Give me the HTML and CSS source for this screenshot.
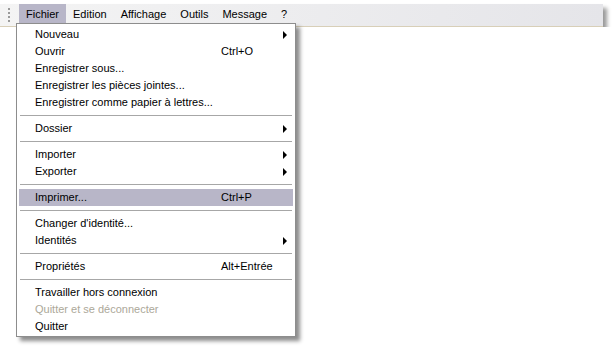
FILE: index.html
```html
<!DOCTYPE html>
<html lang="fr">
  <head>
    <meta charset="UTF-8" />
    <title>Fichier</title>
    <link rel="stylesheet" href="styles.css">
  </head>
  <body>
    <div class="menubar">
      <span class="grip"></span>
      <span class="top open">Fichier</span>
      <span class="top">Edition</span>
      <span class="top">Affichage</span>
      <span class="top">Outils</span>
      <span class="top">Message</span>
      <span class="top">?</span>
    </div>

    <ul class="menu">
      <li class="sub">Nouveau</li>
      <li>Ouvrir<span class="key">Ctrl+O</span></li>
      <li>Enregistrer sous...</li>
      <li>Enregistrer les pièces jointes...</li>
      <li>Enregistrer comme papier à lettres...</li>
      <li class="sep"></li>
      <li class="sub">Dossier</li>
      <li class="sep"></li>
      <li class="sub">Importer</li>
      <li class="sub">Exporter</li>
      <li class="sep"></li>
      <li class="hover">Imprimer...<span class="key">Ctrl+P</span></li>
      <li class="sep"></li>
      <li>Changer d'identité...</li>
      <li class="sub">Identités</li>
      <li class="sep"></li>
      <li>Propriétés<span class="key">Alt+Entrée</span></li>
      <li class="sep"></li>
      <li>Travailler hors connexion</li>
      <li class="off">Quitter et se déconnecter</li>
      <li>Quitter</li>
    </ul>
  </body>
</html>
```

FILE: styles.css
```css
* {
  margin: 0;
  padding: 0;
}

ul,
li {
  list-style: none;
}

body {
  background: #fff;
  font-family: "Liberation Sans", Arial, sans-serif;
  font-size: 11px;
  color: #000;
}

.menubar {
  display: flex;
  align-items: flex-start;
  margin-top: 4px;
  width: 603px;
  height: 22px;
  background: linear-gradient(to right, #f4f4f4, #e5e5e9);
  border-bottom: 1px solid #d8cfb8;
  box-shadow: 4px 4px 4px rgba(0, 0, 0, 0.4);
}

.menubar .grip {
  width: 2px;
  height: 14px;
  margin: 4px 9px 0 8px;
  background: repeating-linear-gradient(#9a9a9a 0 2px, transparent 2px 4px);
}

.menubar .top {
  height: 19px;
  line-height: 20px;
  padding: 0 7px;
}

.menubar .open {
  background: #b8b6c8;
}

.menu {
  position: absolute;
  left: 16px;
  top: 23px;
  width: 274px;
  padding: 2px 2px 1px;
  background: #fff;
  border: 1px solid #8d8d8d;
  box-shadow: 4px 4px 4px rgba(0, 0, 0, 0.45);
}

.menu li {
  position: relative;
  display: grid;
  grid-template-columns: 186px 1fr;
  height: 17px;
  line-height: 17px;
  padding-left: 16px;
}

.menu .hover {
  background: #b8b6c8;
}

.menu .off {
  color: #aca899;
}

.menu .key {
  grid-column: 2;
}

.menu .sub::after {
  content: "";
  position: absolute;
  right: 6px;
  top: 5px;
  border-left: 4px solid #000;
  border-top: 4px solid transparent;
  border-bottom: 4px solid transparent;
}

.menu .sep {
  height: 9px;
  padding: 0;
  margin: 0 1px;
  background: linear-gradient(transparent 4px, #a7a7a7 4px 5px, transparent 5px);
}
```
